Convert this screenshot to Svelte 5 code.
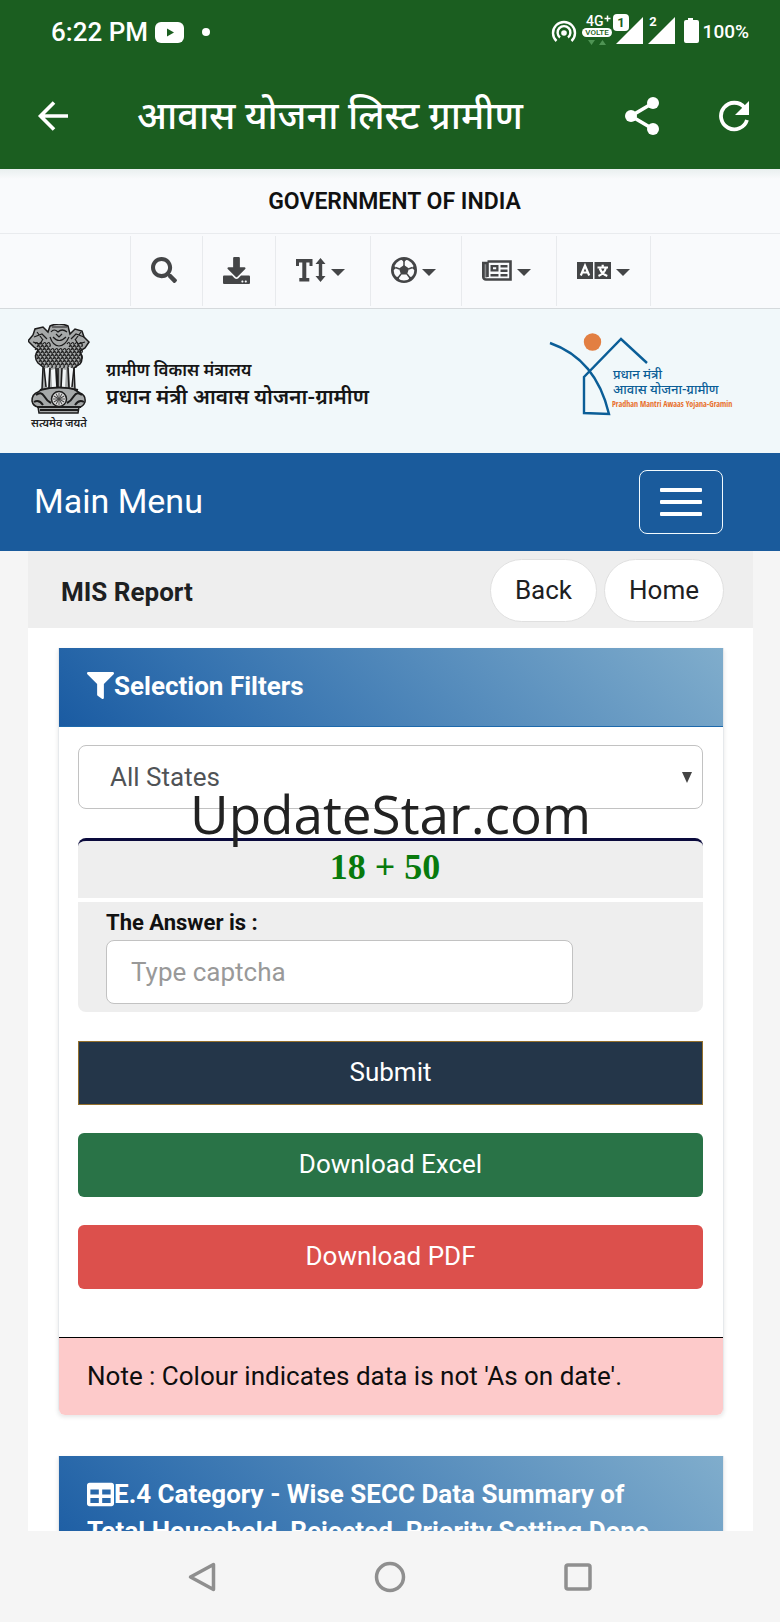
<script>
  let selected = $state('All States');
  let answer = $state('');

  // Short curls that fill the manes of the lion capital
  const curls = [];
  for (let row = 0; row < 8; row++) {
    for (let col = 0; col < 12; col++) {
      const x = 9 + col * 4 + (row % 2) * 2;
      const y = 20 + row * 3;
      const spread = 24 - Math.max(0, row - 4) * 2;
      if (Math.abs(x - 31) < spread && !(row < 2 && Math.abs(x - 31) < 9)) curls.push([x, y]);
    }
  }
  const spokes = Array.from({ length: 12 }, (_, i) => i * 30);
</script>

<div class="screen">
  <div class="status">
    <span class="clock">6:22 PM</span>
    <svg class="tube" width="29" height="21" viewBox="0 0 29 21" aria-hidden="true">
      <rect width="29" height="21" rx="6" fill="#fff" /><path d="M12 6.500v8l7-4z" fill="#1b5e20" />
    </svg>
    <svg width="8" height="8" viewBox="0 0 8 8" aria-hidden="true"><circle cx="4" cy="4" r="4" fill="#fff" /></svg>
    <svg class="signals" width="150" height="36" viewBox="0 0 150 36" aria-hidden="true">
      <g fill="none" stroke="#fff" stroke-width="2.4">
        <path d="M5.500 29a11 11 0 1 1 15 0" />
        <path d="M9 25.500a6.400 6.400 0 1 1 8 0" />
      </g>
      <circle cx="13" cy="21" r="2.800" fill="#fff" />
      <text x="35" y="14" class="net">4G</text>
      <path d="M53.500 6.500h6M56.500 3.500v6" stroke="#fff" stroke-width="1.500" />
      <rect x="31" y="16" width="30" height="9" rx="4.500" fill="#fff" />
      <text x="46" y="23" class="volte">VOLTE</text>
      <path d="M37 28h7l-3.500 5zM48 33h7l-3.500-5z" fill="#4f9454" />
      <path d="M92 5v27H65z" fill="#fff" />
      <rect x="61" y="1" width="18" height="19" rx="5" fill="#1b5e20" />
      <rect x="62" y="2" width="16" height="17" rx="4" fill="#fff" />
      <text x="70" y="15" class="sim dark">1</text>
      <path d="M124 5v27H97z" fill="#fff" />
      <text x="102" y="14" class="sim">2</text>
      <path d="M137 6h5v2h4q2 0 2 2v19q0 2-2 2h-11q-2 0-2-2V10q0-2 2-2h2z" fill="#fff" />
    </svg>
    <span class="battery">100%</span>
  </div>

  <header class="appbar">
    <button class="plain" aria-label="Go back">
      <svg width="32" height="32" viewBox="0 0 32 32"><path d="M17 2.500 3.500 16 17 29.500M3.500 16H31" fill="none" stroke="#fff" stroke-width="3.600" /></svg>
    </button>
    <h1>आवास योजना लिस्ट ग्रामीण</h1>
    <button class="plain" aria-label="Share">
      <svg width="36" height="40" viewBox="0 0 36 40"><path d="M29 7 7 20l22 13" fill="none" stroke="#fff" stroke-width="3.600" /><circle cx="29" cy="7" r="6" fill="#fff" /><circle cx="7" cy="20" r="6" fill="#fff" /><circle cx="29" cy="33" r="6" fill="#fff" /></svg>
    </button>
    <button class="plain" aria-label="Reload">
      <svg width="32" height="32" viewBox="0 0 32 32"><path d="M26.500 7.500A13.300 13.300 0 1 0 29 20" fill="none" stroke="#fff" stroke-width="3.800" /><path d="M31 1v14H17z" fill="#fff" /></svg>
    </button>
  </header>

  <main>
    <div class="gov">GOVERNMENT OF INDIA</div>

    <div class="tools">
      <button aria-label="Search">
        <svg width="26" height="26" viewBox="0 0 512 512"><path d="M505 442.700L405.300 343c-4.500-4.500-10.600-7-17-7H372c27.600-35.300 44-79.700 44-128C416 93.100 322.900 0 208 0S0 93.100 0 208s93.100 208 208 208c48.300 0 92.700-16.400 128-44v16.300c0 6.400 2.500 12.500 7 17l99.700 99.700c9.400 9.400 24.600 9.400 33.900 0l28.300-28.300c9.400-9.400 9.400-24.600.1-34zM208 336c-70.700 0-128-57.200-128-128 0-70.700 57.200-128 128-128 70.700 0 128 57.200 128 128 0 70.700-57.200 128-128 128z" /></svg>
      </button>
      <button aria-label="Download">
        <svg width="27" height="27" viewBox="0 0 512 512"><path d="M216 0h80c13.300 0 24 10.700 24 24v168h87.700c17.800 0 26.700 21.500 14.100 34.100L269.700 378.300c-7.500 7.500-19.800 7.500-27.300 0L90.100 226.100c-12.600-12.600-3.700-34.100 14.100-34.100H192V24c0-13.300 10.700-24 24-24zm296 376v112c0 13.300-10.700 24-24 24H24c-13.300 0-24-10.700-24-24V376c0-13.300 10.700-24 24-24h146.700l49 49c20.100 20.100 52.500 20.100 72.600 0l49-49H488c13.300 0 24 10.700 24 24zm-124 88c0-11-9-20-20-20s-20 9-20 20 9 20 20 20 20-9 20-20zm64 0c0-11-9-20-20-20s-20 9-20 20 9 20 20 20 20-9 20-20z" /></svg>
      </button>
      <button aria-label="Text size">
        <svg width="30" height="26" viewBox="0 0 30 26"><path d="M0 2h16.500v7h-3V5.500H10.300v15.500h3v3.500h-10V21h3V5.500H3V9H0zM24.500 1l5 6h-3.300v12h3.300l-5 6-5-6h3.300V7h-3.300z" /></svg>
        <i class="caret"></i>
      </button>
      <button aria-label="Theme">
        <svg width="26" height="26" viewBox="0 0 26 26"><circle cx="13" cy="13" r="11.700" fill="none" stroke="#444547" stroke-width="2.600" /><path d="m13 8 5 3.600-2 6h-6l-2-6zM13 5 9 1.500h8zM21 11l3.500-4 .8 8zM18 20l5-.5-5 5zM8 20l-5-.5 5 5zM5 11 1.500 7l-.8 8z" /><path d="M13 9V4M17.500 12l4-1.500M16 17l3 4M10 17l-3 4M8.500 12l-4-1.500" stroke="#444547" stroke-width="1.500" /></svg>
        <i class="caret"></i>
      </button>
      <button aria-label="News">
        <svg width="30" height="21" viewBox="0 0 30 21"><path d="M1.300 3h4v14.500H2z" fill="#8a8b8d" /><path d="M5.500 1.500h23v18H4a2.600 2.600 0 0 1-2.700-2.600V3h4.200v14" fill="none" stroke="#444547" stroke-width="2.600" /><path fill-rule="evenodd" d="M8.500 5h8v6.500h-8zM11 7.300v2h3.200v-2zM18.500 5h7v2.500h-7zM18.500 9.500h7V12h-7zM8.500 14h8v2.500h-8zM18.500 14h7v2.500h-7z" /></svg>
        <i class="caret"></i>
      </button>
      <button aria-label="Language">
        <svg width="34" height="17" viewBox="0 0 34 17"><path d="M0 0h16v17H0zM17.500 0H34v17H17.500z" /><path d="M3.800 13.500 8 3.500l4.200 10M5.300 10.500h5.400M20.500 5.500h10.500M25.700 2.800v2.700M29 5.500q-1.500 6-7.500 8.500M22.800 6.500q2 5.500 7.500 7.500" fill="none" stroke="#fff" stroke-width="2.200" /></svg>
        <i class="caret"></i>
      </button>
    </div>

    <section class="brand">
      <figure class="emblem">
        <svg width="62" height="90" viewBox="0 0 62 90" aria-hidden="true">
          <path d="M22 2q9-4 18 0l2 8 5-5 7 2 2 6 5 5-4 6-5 3q4 8 0 13l-6 4 1 22 5 3q6 2 5 9-2 5-6 5l-1 6H11l-1-6q-5-1-6-6 0-7 6-9l4-3 1-22-5-4q-5-6 0-13l-4-3-6-6 5-6 2-6 8-2 5 5z" fill="#a6a9a9" stroke="#1c1c1c" stroke-width="1.500" />
          <g fill="none" stroke="#1c1c1c" stroke-width="1.200">
            {#each curls as [x, y]}
              <path d="M{x - 2} {y}q2-3 3 0t-1 2" />
            {/each}
            <path d="M23 8q3-4 7 0 4-4 9 0M24 3h15M25 13q6 7 13 0M28 10l3 3 3-3M22 13q3 9 9 9t10-9M6 13l8-3 5 5M56 13l-8-3-5 5M5 18l7 2 3-5M57 18l-7 2-3-5M9 8l6 8M53 8l-6 8" />
          </g>
          <path d="M16 45l5-2-1 20h-3zM23 46l4-1 1 18h-4zM34 45l4 1-1 17h-4zM41 43l5 2-1 18h-3z" fill="#f2f6f7" />
          <path d="M16 44l2 19M22 44l-1 20M28 44l1 20M34 44l-1 20M40 44l1 20M46 44l-2 19M30 44v20" stroke="#1c1c1c" stroke-width="1.600" />
          <path d="M12 66q19-5 38 0M8 71q5-4 8 1t7 7M54 71q-5-4-8 1t-7 7M6 78q5-3 9 3M56 78q-5-3-9 3M9 83h44M12 86h38" stroke="#1c1c1c" stroke-width="2" fill="none" />
          <circle cx="31" cy="75" r="7.500" fill="#ddd" stroke="#1c1c1c" stroke-width="1.500" />
          {#each spokes as angle}
            <path d="M31 75V69" stroke="#444" stroke-width=".9" transform="rotate({angle} 31 75)" />
          {/each}
        </svg>
        <figcaption>सत्यमेव जयते</figcaption>
      </figure>
      <div class="ministry">
        <p class="dept">ग्रामीण विकास मंत्रालय</p>
        <p class="scheme">प्रधान मंत्री आवास योजना-ग्रामीण</p>
      </div>
      <svg class="logo" width="176" height="90" viewBox="0 0 176 90" role="img" aria-label="Pradhan Mantri Awaas Yojana-Gramin">
        <circle cx="44.500" cy="13" r="8.700" fill="#e27f42" />
        <path d="M2 14Q48 30 61 85L36 84V48L73 10 99 34" fill="none" stroke="#0b5e97" stroke-width="2.400" />
        <text x="65" y="50" class="blue">प्रधान मंत्री</text>
        <text x="65" y="65" class="blue">आवास योजना-ग्रामीण</text>
        <text x="64" y="78" class="orange">Pradhan Mantri Awaas Yojana-Gramin</text>
      </svg>
    </section>

    <nav class="menu">
      <a href="#menu">Main Menu</a>
      <button aria-label="Open menu"><span></span><span></span><span></span></button>
    </nav>

    <div class="page">
      <div class="crumbs">
        <h2>MIS Report</h2>
        <button>Back</button>
        <button>Home</button>
      </div>

      <section class="panel">
        <h3>
          <svg width="27" height="27" viewBox="0 0 512 512" aria-hidden="true"><path d="M487.976 0H24.028C2.710 0-8.047 25.866 7.058 40.971L192 225.941V432c0 7.831 3.821 15.170 10.237 19.662l80 55.980C298.020 518.690 320 507.493 320 487.980V225.941l184.947-184.970C520.021 25.896 509.338 0 487.976 0z" /></svg>Selection Filters
        </h3>
        <form onsubmit={(e) => e.preventDefault()}>
          <div class="pick">
            <select aria-label="State" bind:value={selected}><option>All States</option></select>
            <svg class="arrow" width="10" height="11" viewBox="0 0 10 11" aria-hidden="true"><path d="M0 0h10L5 11z" /></svg>
            <span class="watermark">UpdateStar.com</span>
          </div>
          <div class="sum">18 + 50</div>
          <div class="answer">
            <label for="captcha">The Answer is :</label>
            <input id="captcha" type="text" placeholder="Type captcha" bind:value={answer} />
          </div>
          <button class="submit">Submit</button>
          <button type="button" class="excel">Download Excel</button>
          <button type="button" class="pdf">Download PDF</button>
        </form>
        <p class="note">Note : Colour indicates data is not 'As on date'.</p>
      </section>

      <section class="panel">
        <h3>
          <svg class="grid" width="27" height="27" viewBox="0 0 512 512" aria-hidden="true"><path d="M464 32H48C21.490 32 0 53.490 0 80v352c0 26.510 21.490 48 48 48h416c26.510 0 48-21.490 48-48V80c0-26.510-21.490-48-48-48zM224 416H64v-96h160v96zm0-160H64v-96h160v96zm224 160H288v-96h160v96zm0-160H288v-96h160v96z" /></svg>E.4 Category - Wise SECC Data Summary of Total Household, Rejected, Priority Setting Done
        </h3>
      </section>
    </div>
  </main>

  <footer>
    <button class="plain" aria-label="Back"><svg width="30" height="32" viewBox="0 0 30 32"><path d="M3.500 16 26.500 3.500v25z" /></svg></button>
    <button class="plain" aria-label="Home screen"><svg width="32" height="32" viewBox="0 0 32 32"><circle cx="16" cy="16" r="13.500" /></svg></button>
    <button class="plain" aria-label="Recent apps"><svg width="30" height="32" viewBox="0 0 30 32"><rect x="3" y="4" width="24" height="24" rx="2" /></svg></button>
  </footer>
</div>

<style>
  :global(body) { margin: 0; background: #f5f5f5; }
  .screen {
    height: 100vh; display: flex; flex-direction: column; overflow: hidden;
    font-family: Roboto, "Noto Sans", "Noto Sans Devanagari", sans-serif; font-size: 26px; line-height: 36px; color: #1d2022;
  }
  .screen * { box-sizing: border-box; }
  button, select, input { font: inherit; margin: 0; }
  h1, h2, h3, p, figure { margin: 0; }
  .plain { display: flex; padding: 0; border: 0; background: none; }

  .status { flex: none; display: flex; align-items: center; height: 64px; padding: 0 31px 0 51px; background: #1b5e20; color: #fff; }
  .clock { font-weight: 500; }
  .tube { margin: 0 18px 0 7px; }
  .signals { margin: 0 0 4px auto; }
  .battery { font-size: 19px; margin-left: 2px; font-weight: 500; }
  .net { font-size: 14px; font-weight: 500; fill: #fff; }
  .volte { font-size: 8px; font-weight: 500; fill: #1b5e20; text-anchor: middle; }
  .sim { font-size: 13px; font-weight: 700; fill: #fff; text-anchor: middle; }
  .sim.dark { fill: #1b5e20; }

  .appbar { flex: none; display: flex; align-items: center; height: 105px; padding: 0 30px 2px 37px; background: #1b5e20; }
  h1 { flex: 1; margin-left: 68px; color: #fff; font-size: 38px; line-height: 48px; font-weight: 500; white-space: nowrap; }
  .appbar button + button { margin-left: 58px; }

  main { flex: 1; min-height: 0; overflow: hidden; background: #f5f5f5; }
  .gov { height: 65px; padding: 15px 0 0 9px; border-bottom: 1px solid #e9ebee; background: linear-gradient(#e9efef, #f9fafc 10px); text-align: center; font-size: 23px; font-weight: 600; color: #111; }
  .tools { display: flex; justify-content: center; height: 75px; padding: 2px 0; border-bottom: 1px solid #d5d9dc; background: #f9fafc; }
  .tools button { display: flex; align-items: center; gap: 5px; padding: 0 25px 2px 20px; border: 0; border-right: 1px solid #e8eaed; background: none; fill: #444547; }
  .tools button:first-child { border-left: 1px solid #e8eaed; }
  .tools button:last-child { padding-right: 20px; }
  .tools svg { flex: none; }
  .caret { border: 7px solid transparent; border-top-color: #444547; border-bottom: 0; margin-top: 4px; }

  .brand { display: flex; align-items: center; height: 144px; padding: 0 56px 0 28px; background: #f1f8fa; }
  .emblem { display: flex; flex-direction: column; align-items: center; width: 62px; padding-bottom: 7px; }
  figcaption { margin-top: 3px; font-size: 11px; line-height: 14px; font-weight: 600; color: #222; white-space: nowrap; }
  .ministry { flex: 1; margin-left: 16px; padding-top: 6px; color: #161616; font-weight: 600; white-space: nowrap; }
  .dept { font-size: 17px; line-height: 26px; }
  .scheme { font-size: 21px; line-height: 28px; }
  .logo { overflow: visible; margin-bottom: 15px; }
  .blue { font-size: 13px; font-weight: 500; fill: #0b5e97; }
  .orange { font-family: "Liberation Sans Narrow", "Open Sans Condensed", "Noto Sans", sans-serif; font-size: 8px; font-weight: 700; fill: #e8702c; }

  .menu { display: flex; align-items: center; justify-content: space-between; height: 98px; padding: 0 57px 0 34px; background: #1a5b9c; }
  .menu a { padding-bottom: 2px; color: #fff; font-size: 34px; text-decoration: none; }
  .menu button { display: flex; flex-direction: column; align-items: center; justify-content: center; gap: 8px; width: 84px; height: 64px; padding: 0; border: 1px solid #f2fbff; border-radius: 8px; background: none; }
  .menu span { width: 42px; height: 4px; border-radius: 1px; background: #fff; }

  .page { margin: 0 27px 0 28px; background: #fff; min-height: 1200px; }
  .crumbs { display: flex; align-items: center; gap: 7px; height: 77px; padding: 2px 29px 0 33px; background: #eee; }
  h2 { flex: 1; padding-top: 3px; font-size: 26px; font-weight: 700; }
  .crumbs button { height: 63px; padding: 0 24px 2px; border: 1px solid #e0e0e0; border-radius: 32px; background: #fff; color: #1d2022; }

  .panel { margin: 20px 29px 41px 30px; border: 1px solid #e6e9ec; border-width: 0 1px; border-radius: 0 0 6px 6px; box-shadow: 0 2px 4px #0000001a; }
  h3 { min-height: 79px; padding: 20px 48px 20px 28px; border-bottom: 1px solid #1d69ac; background: linear-gradient(45deg, #1a5ba2, #3371af 25%, #80adcc); color: #fff; font-size: 26px; line-height: 37px; font-weight: 700; }
  h3 svg { fill: #fff; vertical-align: -4px; }
  h3 .grid { vertical-align: -5px; }
  form { display: flex; flex-direction: column; padding: 18px 20px 48px 19px; }
  .pick { position: relative; display: flex; align-items: center; }
  select { appearance: none; width: 100%; height: 64px; padding: 0 31px; border: 1px solid #c2c2c2; border-radius: 8px; background: #fff; color: #505356; }
  .arrow { position: absolute; right: 11px; fill: #444; }
  .watermark { position: absolute; left: 0; right: 0; top: 31px; text-align: center; font: 53px/76px "Open Sans", "Noto Sans", sans-serif; color: #222; pointer-events: none; z-index: 1; }
  .sum { height: 60px; margin-top: 29px; padding: 8px 11px 0 0; border-top: 3px solid #0a0a3c; border-radius: 8px 8px 0 0; background: #eee; text-align: center; font-family: "Liberation Serif", serif; font-size: 36px; font-weight: 700; color: #087a0c; }
  .answer { display: flex; flex-direction: column; margin: 4px 0 1px; padding: 4px 28px 8px; border-radius: 0 0 8px 8px; background: #eee; }
  label { font-size: 22px; line-height: 34px; font-weight: 700; color: #111; }
  input { width: 82%; height: 64px; padding: 0 24px; border: 1px solid #c2c2c2; border-radius: 8px; background: #fff; color: #555; }
  input::placeholder { color: #999; opacity: 1; }
  form > button { height: 64px; margin-top: 28px; border: 0; border-radius: 6px; color: #fff; padding: 0 0 2px; }
  .submit { border: 1px solid #94702c; border-radius: 0; background: #243649; }
  .excel { background: #297347; }
  .pdf { background: #dc504c; }
  .note { height: 78px; padding: 20px 28px; border-top: 1px solid #000; border-radius: 0 0 6px 6px; background: #fdcaca; color: #0e0e0e; }

  footer { flex: none; display: flex; align-items: center; justify-content: center; gap: 157px; height: 91px; background: #f5f5f5; }
  footer svg { fill: none; stroke: #8f8f8f; stroke-width: 3.500; stroke-linejoin: round; }
</style>
